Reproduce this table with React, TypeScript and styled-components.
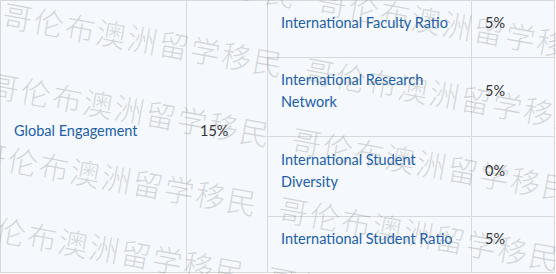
import React from 'react';
import styled, { createGlobalStyle } from 'styled-components';

const GlobalStyle = createGlobalStyle`
  body {
    margin: 0;
    background: #ffffff;
    font-family: Lato, 'Noto Sans', sans-serif;
  }
`;

const LINK_BLUE = '#2160a8';
const BORDER = '#d6d8db';
const CELL_BG = '#f5f8fc';

interface ISubRow {
  name: string;
  weight: string;
}

const SUB_ROWS: ISubRow[] = [
  { name: 'International Faculty Ratio', weight: '5%' },
  { name: 'International Research Network', weight: '5%' },
  { name: 'International Student Diversity', weight: '0%' },
  { name: 'International Student Ratio', weight: '5%' },
];

const WATERMARK = '哥伦布澳洲留学移民';

// rotated tiling of the watermark: origin, step along the text, step between rows
const ORIGIN = { x: 3, y: 13 };
const ALONG = { x: 302, y: 55 };
const ACROSS = { x: -12.8, y: 69.5 };

function watermarkSpots() {
  const spots: { x: number; y: number }[] = [];
  for (let i = -1; i <= 2; i++) {
    for (let j = -1; j <= 5; j++) {
      const x = ORIGIN.x + i * ALONG.x + j * ACROSS.x;
      const y = ORIGIN.y + i * ALONG.y + j * ACROSS.y;
      if (x > 560 || y > 290 || x < -320 || y < -70) continue;
      spots.push({ x, y });
    }
  }
  return spots;
}

export default function App() {
  return (
    <>
      <GlobalStyle />
      <Frame>
        <Table>
          <Cell $row="1 / 5" $col="1">
            <LinkText>Global Engagement</LinkText>
          </Cell>
          <Cell $row="1 / 5" $col="2">
            <Value>15%</Value>
          </Cell>
          {SUB_ROWS.map((sub, idx) => (
            <React.Fragment key={sub.name}>
              <Cell $row={`${idx + 1}`} $col="3">
                <LinkText>{sub.name}</LinkText>
              </Cell>
              <Cell $row={`${idx + 1}`} $col="4">
                <Value>{sub.weight}</Value>
              </Cell>
            </React.Fragment>
          ))}
        </Table>
        <Watermarks>
          {watermarkSpots().map((spot) => (
            <Mark key={`${spot.x}-${spot.y}`} style={{ left: spot.x, top: spot.y - 15 }}>
              {WATERMARK}
            </Mark>
          ))}
        </Watermarks>
      </Frame>
    </>
  );
}

const Frame = styled.div`
  position: relative;
  width: 556px;
  height: 274px;
  overflow: hidden;
  background: #ffffff;
`;

const Table = styled.div`
  display: grid;
  grid-template-columns: 185px 80px 203px 82px;
  grid-template-rows: 56px 78px 79px 55px;
  gap: 1px;
  padding: 1px;
  width: 555px;
  height: 273px;
  box-sizing: border-box;
  background: ${BORDER};
`;

const Cell = styled.div<{ $row: string; $col: string }>`
  grid-row: ${(p) => p.$row};
  grid-column: ${(p) => p.$col};
  display: flex;
  align-items: center;
  padding: 0 10px 12px 13px;
  background: ${CELL_BG};
  box-sizing: border-box;
`;

const LinkText = styled.span`
  color: ${LINK_BLUE};
  font-size: 14.5px;
  line-height: 22px;
`;

const Value = styled.span`
  color: #333333;
  font-size: 14.5px;
  line-height: 22px;
`;

const Watermarks = styled.div`
  position: absolute;
  inset: 0;
  pointer-events: none;
`;

const Mark = styled.span`
  position: absolute;
  white-space: nowrap;
  font-family: 'Noto Sans CJK SC', 'Noto Sans', sans-serif;
  font-size: 30px;
  font-weight: 300;
  line-height: 30px;
  letter-spacing: 1.8px;
  color: rgba(90, 90, 90, 0.22);
  transform: rotate(10.3deg);
  transform-origin: 0 50%;
`;
